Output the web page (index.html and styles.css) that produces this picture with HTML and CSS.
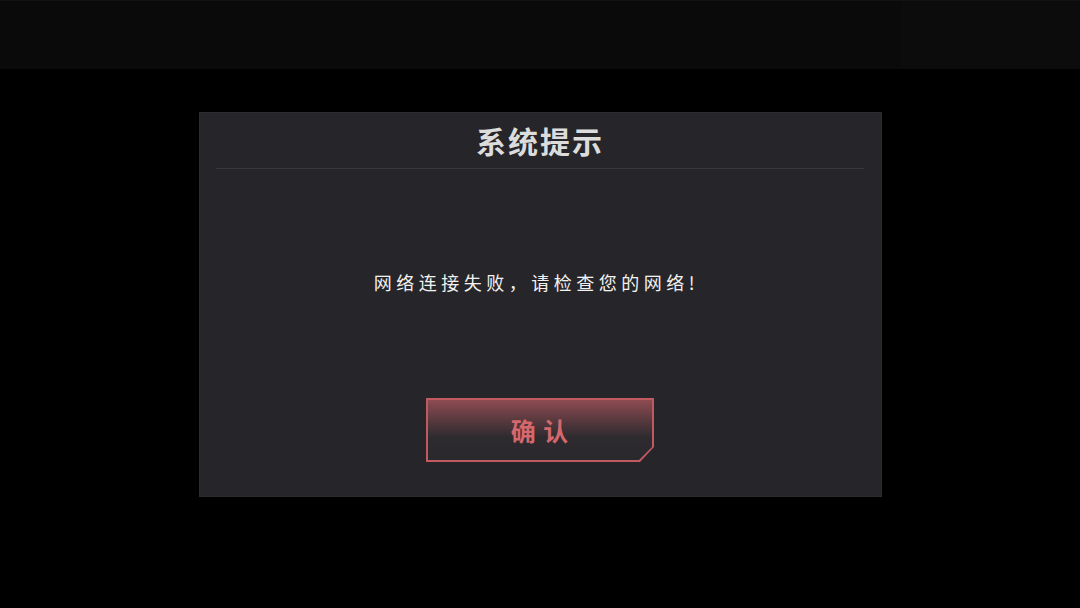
FILE: index.html
```html
<!DOCTYPE html>
<html lang="zh-CN">
<head>
    <meta charset="UTF-8">
    <meta name="viewport" content="width=device-width, initial-scale=1.0">
    <title>系统提示</title>
    <link rel="stylesheet" href="styles.css">
</head>
<body>
    <div class="topbar">
        <div class="topbar-main"></div>
        <div class="topbar-side"></div>
    </div>
    <div class="stage">
        <div class="dialog">
            <div class="dialog-title">系统提示</div>
            <div class="dialog-msg">网络连接失败，请检查您的网络!</div>
            <div class="dialog-btns">
                <button type="button" class="btn-ok">
                    <span class="btn-face">确 认</span>
                </button>
            </div>
        </div>
    </div>
</body>
</html>
```

FILE: styles.css
```css
body {
    margin: 0;
    width: 1080px;
    height: 608px;
    background-color: #000;
    font-family: "Noto Sans CJK SC", "Noto Sans", sans-serif;
    overflow: hidden;
}
.topbar {
    display: flex;
    height: 68px;
    border-top: 1px solid #121212;
}
.topbar-main {
    flex: 1;
    background-color: #0a0a0a;
}
.topbar-side {
    width: 179px;
    background-color: #0c0c0c;
}
.stage {
    display: flex;
    justify-content: center;
    padding-top: 43px;
}
.dialog {
    width: 681px;
    height: 383px;
    margin-left: 1px;
    background-color: #262529;
    border: 1px solid #2c2b2f;
    display: flex;
    flex-direction: column;
}
.dialog-title {
    margin: 0 17px 0 16px;
    height: 55px;
    border-bottom: 1px solid #38373b;
    color: #dcdcdc;
    font-size: 30px;
    font-weight: bold;
    letter-spacing: 2px;
    text-align: center;
    line-height: 55px;
}
.dialog-msg {
    margin-top: 98px;
    padding-right: 8px;
    color: #f2f2f2;
    font-size: 18px;
    letter-spacing: 4.5px;
    text-align: center;
    line-height: 30px;
}
.dialog-btns {
    display: flex;
    justify-content: center;
    margin-top: 101px;
    padding-right: 1px;
}
/* chamfered frame: outer layer is the border colour, inner face sits 2px in */
.btn-ok {
    width: 228px;
    height: 64px;
    padding: 2px;
    border: none;
    background-color: #c15a60;
    clip-path: polygon(0 0, 100% 0, 100% 49px, calc(100% - 14px) 100%, 0 100%);
    cursor: pointer;
}
.btn-face {
    display: block;
    height: 100%;
    background: linear-gradient(to bottom, #8e4b52 0%, #5e3b40 30%, #2e2b2f 62%, #29282c 100%);
    clip-path: polygon(0 0, 100% 0, 100% 47px, calc(100% - 13px) 100%, 0 100%);
    color: #d5676d;
    font-family: "Noto Sans CJK SC", sans-serif;
    font-size: 25px;
    font-weight: bold;
    letter-spacing: 1px;
    line-height: 60px;
    text-align: center;
}
```
